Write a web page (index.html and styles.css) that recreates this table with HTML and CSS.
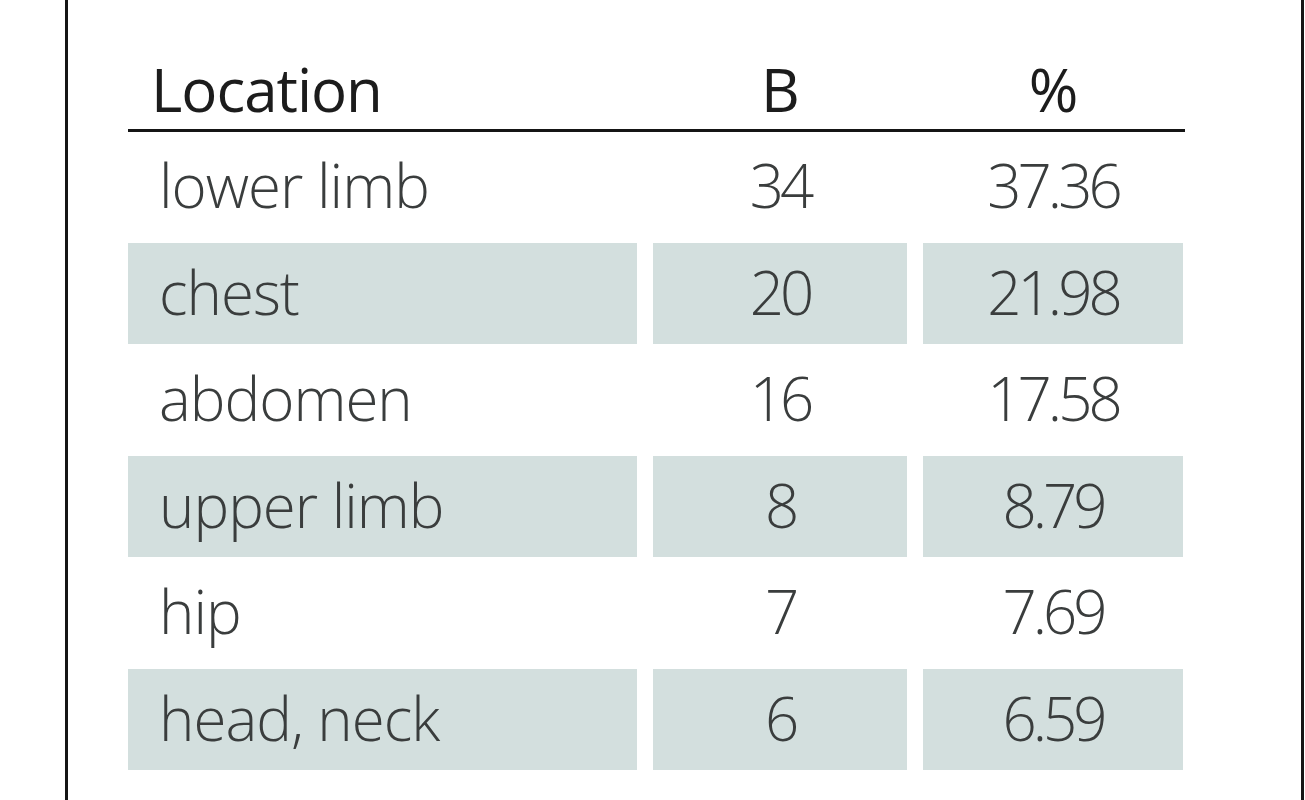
FILE: index.html
```html
<!DOCTYPE html>
<html lang="en">
<head>
<meta charset="utf-8">
<title>Location table</title>
<link rel="stylesheet" href="styles.css">
</head>
<body>
<div class="frame">
  <div class="table">
    <div class="head">
      <div class="hcell first">Location</div>
      <div class="hcell">B</div>
      <div class="hcell">%</div>
    </div>
    <div class="body">
      <div class="cell first">lower limb</div><div class="cell num">34</div><div class="cell num">37.36</div>
      <div class="cell first shade">chest</div><div class="cell num shade">20</div><div class="cell num shade">21.98</div>
      <div class="cell first">abdomen</div><div class="cell num">16</div><div class="cell num">17.58</div>
      <div class="cell first shade">upper limb</div><div class="cell num shade">8</div><div class="cell num shade">8.79</div>
      <div class="cell first">hip</div><div class="cell num">7</div><div class="cell num">7.69</div>
      <div class="cell first shade">head, neck</div><div class="cell num shade">6</div><div class="cell num shade">6.59</div>
    </div>
  </div>
</div>
</body>
</html>
```
FILE: styles.css
```css
html, body {
  margin: 0;
  padding: 0;
  background: #ffffff;
}
body {
  font-family: "Open Sans", "Liberation Sans", sans-serif;
  width: 1305px;
  height: 800px;
  overflow: hidden;
}
.frame {
  margin-left: 65px;
  width: 1173px;
  height: 800px;
  border-left: 3px solid #151515;
  border-right: 3px solid #151515;
  padding-left: 60px;
  box-sizing: content-box;
}
.table {
  width: 1057px;
}
.head {
  display: grid;
  grid-template-columns: 509px 254px 260px;
  column-gap: 16px;
  height: 132px;
  padding-top: 54px;
  box-sizing: border-box;
  border-bottom: 3px solid #151515;
}
.hcell {
  font-size: 60px;
  font-weight: 400;
  color: #1c1c1c;
  text-align: center;
  line-height: 70px;
  letter-spacing: -1px;
}
.hcell.first {
  text-align: left;
  padding-left: 23px;
}
.body {
  display: grid;
  grid-template-columns: 509px 254px 260px;
  column-gap: 16px;
  row-gap: 5.5px;
  grid-auto-rows: 101px;
  margin-top: 4px;
}
.cell {
  font-size: 60px;
  font-weight: 300;
  color: #3a3d3d;
  text-align: center;
  line-height: 99px;
  letter-spacing: -1px;
}
.cell.num {
  letter-spacing: -4px;
}
.cell.first {
  text-align: left;
  padding-left: 31px;
}
.cell.shade {
  background: #d3dfde;
}
```
